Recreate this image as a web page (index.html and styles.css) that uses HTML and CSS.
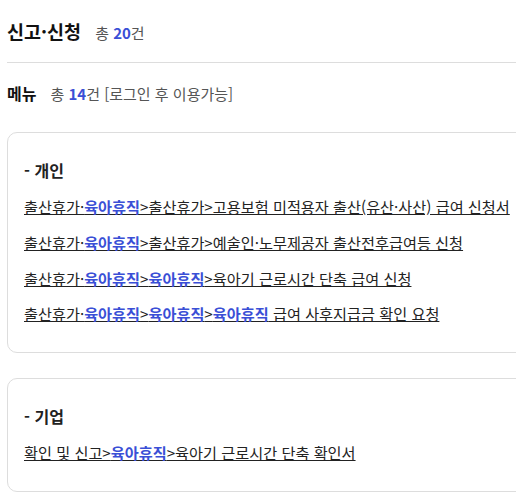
FILE: index.html
```html
<!DOCTYPE html>
<html lang="ko">
<head>
<meta charset="utf-8">
<link rel="stylesheet" href="styles.css">
</head>
<body>
<div class="page">
  <div class="title-row">
    <h2 class="title">신고·신청</h2>
    <span class="count">총 <b class="num">20</b>건</span>
  </div>
  <hr class="divider">
  <div class="menu-row">
    <h3 class="menu">메뉴</h3>
    <span class="count">총 <b class="num">14</b>건 [로그인 후 이용가능]</span>
  </div>

  <section class="card">
    <h4 class="group">- 개인</h4>
    <ul class="links">
      <li><a href="#">출산휴가·<b class="hl">육아휴직</b>&gt;출산휴가&gt;고용보험 미적용자 출산(유산·사산) 급여 신청서</a></li>
      <li><a href="#">출산휴가·<b class="hl">육아휴직</b>&gt;출산휴가&gt;예술인·노무제공자 출산전후급여등 신청</a></li>
      <li><a href="#">출산휴가·<b class="hl">육아휴직</b>&gt;<b class="hl">육아휴직</b>&gt;육아기 근로시간 단축 급여 신청</a></li>
      <li><a href="#">출산휴가·<b class="hl">육아휴직</b>&gt;<b class="hl">육아휴직</b>&gt;<b class="hl">육아휴직</b> 급여 사후지급금 확인 요청</a></li>
    </ul>
  </section>

  <section class="card">
    <h4 class="group">- 기업</h4>
    <ul class="links">
      <li><a href="#">확인 및 신고&gt;<b class="hl">육아휴직</b>&gt;육아기 근로시간 단축 확인서</a></li>
    </ul>
  </section>
</div>
</body>
</html>
```

FILE: styles.css
```css
html, body {
  margin: 0;
  padding: 0;
  background: #fff;
  overflow: hidden;
}
body {
  font-family: "Noto Sans CJK KR", "Noto Sans", sans-serif;
  color: #222;
}
.page {
  width: 530px;
  padding: 18px 0 0 7px;
}
.title-row {
  display: flex;
  align-items: baseline;
  gap: 14px;
}
.title {
  margin: 0;
  font-size: 18.5px;
  line-height: 26px;
  font-weight: 700;
  color: #111;
}
.count {
  font-size: 15px;
  line-height: 22px;
  color: #555;
}
.num {
  font-weight: 700;
  color: #3a4fd6;
}
.divider {
  margin: 18px 0 0;
  border: 0;
  border-top: 1px solid #dddddd;
  height: 0;
}
.menu-row {
  display: flex;
  align-items: baseline;
  gap: 14px;
  margin-top: 19px;
}
.menu {
  margin: 0;
  font-size: 16px;
  line-height: 22px;
  font-weight: 700;
  color: #111;
}
.card {
  margin-top: 27px;
  border: 1px solid #dddddd;
  border-radius: 10px;
  padding: 26px 16px 28px;
}
.card + .card {
  margin-top: 25px;
}
.group {
  margin: 0;
  font-size: 16px;
  line-height: 22px;
  font-weight: 700;
  color: #222;
}
.links {
  list-style: none;
  margin: 0;
  padding: 0;
}
.links li {
  margin-top: 14px;
  font-size: 15.2px;
  line-height: 22px;
}
.links li + li {
  margin-top: 13.8px;
}
.links a {
  color: #222;
  text-decoration: underline;
}
.hl {
  font-weight: 700;
  color: #3a4fd6;
}
```
